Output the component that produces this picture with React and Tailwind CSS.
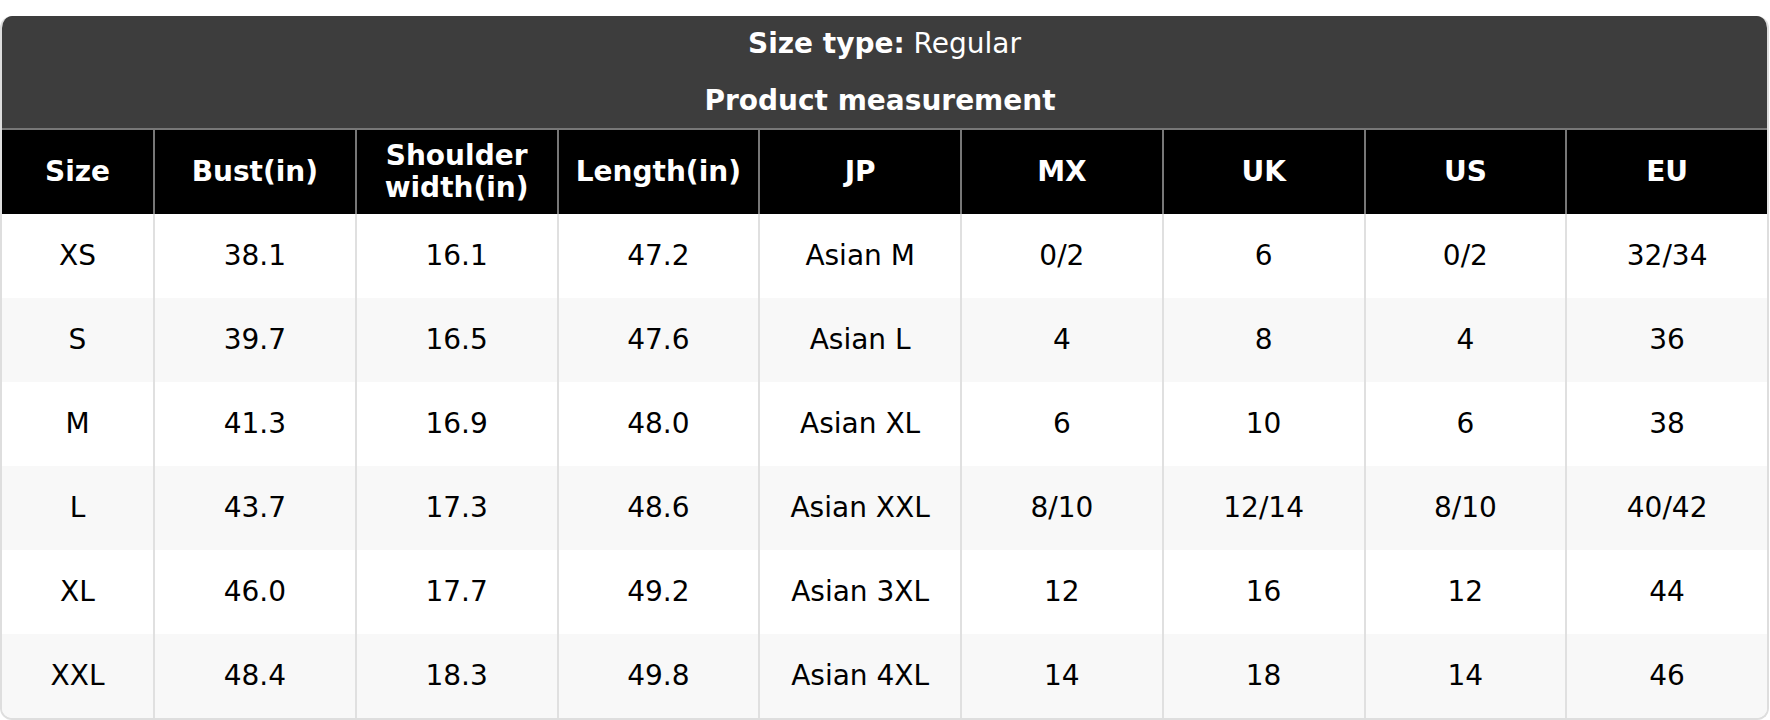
import React from "react";

const headers = [
  ["Size"],
  ["Bust(in)"],
  ["Shoulder", "width(in)"],
  ["Length(in)"],
  ["JP"],
  ["MX"],
  ["UK"],
  ["US"],
  ["EU"],
];

const rows = [
  ["XS", "38.1", "16.1", "47.2", "Asian M", "0/2", "6", "0/2", "32/34"],
  ["S", "39.7", "16.5", "47.6", "Asian L", "4", "8", "4", "36"],
  ["M", "41.3", "16.9", "48.0", "Asian XL", "6", "10", "6", "38"],
  ["L", "43.7", "17.3", "48.6", "Asian XXL", "8/10", "12/14", "8/10", "40/42"],
  ["XL", "46.0", "17.7", "49.2", "Asian 3XL", "12", "16", "12", "44"],
  ["XXL", "48.4", "18.3", "49.8", "Asian 4XL", "14", "18", "14", "46"],
];

export default function App() {
  return (
    <div
      className="w-[1770px] h-[720px] bg-white pt-[16px]"
      style={{ fontFamily: '"DejaVu Sans", Verdana, sans-serif' }}
    >
      <div className="w-[1769px] rounded-[12px] overflow-hidden border-l-2 border-r-2 border-b-2 border-[#dedede]">
        <div className="bg-[#3d3d3d] text-white text-[28px] text-center h-[112px] pt-[8px]">
          <div className="leading-[40px]">
            <span className="font-bold">Size type:</span> Regular
          </div>
          <div className="leading-[40px] mt-[17px] pr-[9px] font-bold">Product measurement</div>
        </div>
        <div className="grid grid-cols-[151px_repeat(8,1fr)] bg-black border-t-2 border-[#777] h-[86px]">
          {headers.map((h, i) => (
            <div
              key={i}
              className={
                "flex flex-col items-center justify-center text-white font-bold text-[28px] leading-[32px] text-center " +
                (i > 0 ? "border-l-2 border-[#777]" : "")
              }
            >
              {h.map((l, j) => (
                <div key={j}>{l}</div>
              ))}
            </div>
          ))}
        </div>
        {rows.map((r, ri) => (
          <div
            key={ri}
            className={
              "grid grid-cols-[151px_repeat(8,1fr)] h-[84px] " +
              (ri % 2 === 1 ? "bg-[#f8f8f8]" : "bg-white")
            }
          >
            {r.map((c, ci) => (
              <div
                key={ci}
                className={
                  "flex items-center justify-center text-[28px] text-black " +
                  (ci > 0 ? "border-l-2 border-[#e0e0e0]" : "")
                }
              >
                {c}
              </div>
            ))}
          </div>
        ))}
      </div>
    </div>
  );
}
